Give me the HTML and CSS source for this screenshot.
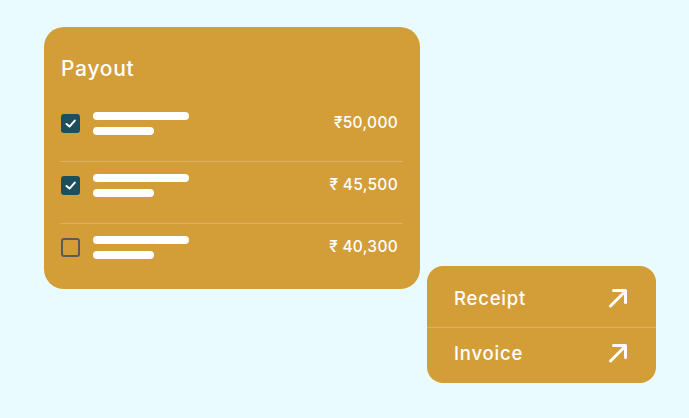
FILE: index.html
```html
<!DOCTYPE html>
<html lang="en">
<head>
  <meta charset="UTF-8" />
  <title>Payout</title>
  <meta name="viewport" content="width=device-width, initial-scale=1.0">
  <link rel="stylesheet" href="styles.css">
</head>
<body>
  <div class="scene">
    <div class="payout">
      <h2>Payout</h2>

      <div class="row">
        <span class="check on">
          <svg viewBox="0 0 19 19"><path d="M5.5 10 L8.5 12.6 L13.8 6.6" /></svg>
        </span>
        <div class="bars"><span class="bar long"></span><span class="bar short"></span></div>
        <div class="amount">₹50,000</div>
      </div>

      <div class="row">
        <span class="check on">
          <svg viewBox="0 0 19 19"><path d="M5.5 10 L8.5 12.6 L13.8 6.6" /></svg>
        </span>
        <div class="bars"><span class="bar long"></span><span class="bar short"></span></div>
        <div class="amount">₹ 45,500</div>
      </div>

      <div class="row">
        <span class="check"></span>
        <div class="bars"><span class="bar long"></span><span class="bar short"></span></div>
        <div class="amount">₹ 40,300</div>
      </div>
    </div>

    <div class="links">
      <a class="link first" href="#">
        <span>Receipt</span>
        <svg viewBox="0 0 20 20"><path d="M2.5 18 L16.5 4 M5.5 2.5 H17.5 V14.5" /></svg>
      </a>
      <a class="link second" href="#">
        <span>Invoice</span>
        <svg viewBox="0 0 20 20"><path d="M2.5 18 L16.5 4 M5.5 2.5 H17.5 V14.5" /></svg>
      </a>
    </div>
  </div>
</body>
</html>
```

FILE: styles.css
```css
body {
  margin: 0;
  font-family: 'Inter', 'Noto Sans', sans-serif;
  background-color: #e9fbfe;
  color: #ffffff;
  width: 689px;
  height: 418px;
  overflow: hidden;
}

.scene {
  display: grid;
  grid-template-columns: 376px 229px;
  grid-template-rows: 239px 117px;
  column-gap: 7px;
  padding: 27px 0 0 44px;
}

.payout {
  grid-column: 1;
  grid-row: 1 / 3;
  align-self: start;
  height: 262px;
  box-sizing: border-box;
  background-color: #d39e38;
  border-radius: 20px;
  padding: 30px 17px 4px 16px;
}

h2 {
  margin: 0 0 19px 1px;
  font-size: 21px;
  line-height: 24px;
  font-weight: 500;
  letter-spacing: 0.7px;
}

.row {
  display: flex;
  align-items: flex-start;
  padding: 12px 0 26px 1px;
  border-bottom: 1px solid rgba(255, 255, 255, 0.22);
}

.row:last-child {
  border-bottom: none;
}

.check {
  width: 19px;
  height: 19px;
  box-sizing: border-box;
  margin-top: 2px;
  border-radius: 3px;
  border: 2px solid #5b5a55;
  flex-shrink: 0;
}

.check.on {
  border: none;
  background-color: #1c4f5c;
}

.check svg {
  display: block;
  width: 19px;
  height: 19px;
  fill: none;
  stroke: #ffffff;
  stroke-width: 2;
  stroke-linecap: round;
  stroke-linejoin: round;
}

.bars {
  display: flex;
  flex-direction: column;
  gap: 7px;
  margin-left: 13px;
}

.bar {
  display: block;
  height: 8px;
  border-radius: 4px;
  background: #ffffff;
}

.bar.long {
  width: 96px;
}

.bar.short {
  width: 61px;
}

.amount {
  margin-left: auto;
  margin-top: 1px;
  padding-right: 5px;
  font-size: 15.5px;
  line-height: 20px;
  font-weight: 500;
  letter-spacing: 0.3px;
}

.links {
  grid-column: 2;
  grid-row: 2;
  background-color: #d39e38;
  border-radius: 16px;
  height: 117px;
  display: flex;
  flex-direction: column;
}

.link {
  display: flex;
  align-items: center;
  justify-content: space-between;
  color: #ffffff;
  text-decoration: none;
  font-size: 18.5px;
  line-height: 22px;
  font-weight: 500;
  letter-spacing: 0.8px;
  padding: 0 28px 0 27px;
}

.link.first {
  padding-top: 21px;
  padding-bottom: 18px;
  border-bottom: 1px solid rgba(255, 255, 255, 0.22);
}

.link.second {
  padding-top: 14px;
  padding-bottom: 19px;
}

.link svg {
  width: 20px;
  height: 20px;
  fill: none;
  stroke: #ffffff;
  stroke-width: 3;
  stroke-linecap: round;
  stroke-linejoin: round;
}
```
